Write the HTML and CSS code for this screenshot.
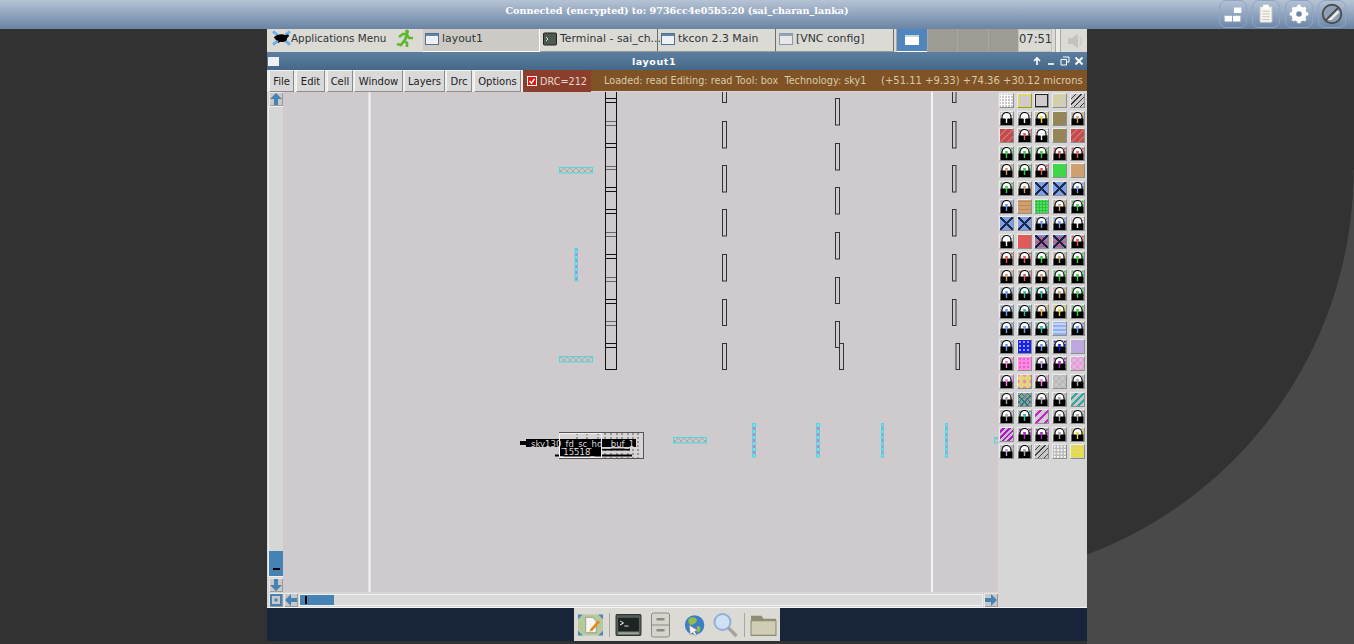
FILE: index.html
```html
<!DOCTYPE html>
<html lang="en">
<head>
    <meta charset="UTF-8">
    <meta name="viewport" content="width=device-width, initial-scale=1.0">
    <title>layout1 - VNC</title>
    <link rel="stylesheet" href="styles.css">
</head>
<body>
    <svg class="defs" width="0" height="0">
        <symbol id="lock" viewBox="0 0 13 13">
            <path d="M2 7V5a4.5 4.5 0 0 1 9 0v2" fill="#fff" stroke="#000" stroke-width="1.1"/>
            <rect x="0.5" y="6.5" width="12" height="6.5" fill="#000"/>
            <path d="M5.2 4h2.6v2.5H5.2zM5.8 6.5h1.4v4.5H5.8z" fill="currentColor"/>
        </symbol>
        <symbol id="winicon" viewBox="0 0 14 14">
            <rect x="0.5" y="1.5" width="13" height="11" fill="#eef0f2" stroke="#55708f"/>
            <rect x="1" y="2" width="12" height="2" fill="#5a84ad"/>
        </symbol>
    </svg>

    <header class="vnc-bar">
        <div></div>
        <div class="vnc-title">Connected (encrypted) to: 9736cc4e05b5:20 (sai_charan_lanka)</div>
        <div class="vnc-tools">
            <span class="vnc-btn"><svg viewBox="0 0 28 28"><path d="M5 16h8v6H5zM14 16h8v6h-8zM15 7h8v6h-8z" fill="#fff"/></svg></span>
            <span class="vnc-btn"><svg viewBox="0 0 28 28"><rect x="7.5" y="6" width="13" height="17" rx="1" fill="#f8f6ee" stroke="#b4bfcc"/><rect x="11" y="4" width="6" height="4" fill="#fff"/><path d="M10 11h8M10 14h8M10 17h8M10 20h8" stroke="#c4c4ba"/></svg></span>
            <span class="vnc-btn"><svg viewBox="0 0 28 28"><circle cx="14" cy="14" r="6" fill="none" stroke="#fff" stroke-width="4.5"/><path d="M14 4v20M4 14h20M7 7l14 14M21 7L7 21" stroke="#fff" stroke-width="3.4"/><circle cx="14" cy="14" r="3" fill="#6f88a8"/></svg></span>
            <span class="vnc-btn"><svg viewBox="0 0 28 28"><circle cx="14" cy="14" r="10" fill="#8d9fb5" stroke="#4c4c4c" stroke-width="2"/><path d="M8 19h5l8-8" fill="none" stroke="#e8edf2" stroke-width="3"/><path d="M7 21L21 7" stroke="#4c4c4c" stroke-width="2"/></svg></span>
        </div>
    </header>

    <main class="desktop">
        <nav class="panel">
            <div class="apps">
                <svg class="apps-icon" viewBox="0 0 20 18"><path d="M1 2l5 4M19 2l-5 4M1 16l5-4M19 16l-5-4" stroke="#6fb0e8" stroke-width="3"/><path d="M2 8c3-3 9-4 12-2l3-1 1 2-2 2c0 3-3 5-7 4-1 0-2 2-3 1l1-2C4 12 3 10 2 8z" fill="#000"/></svg>
                <span>Applications Menu</span>
                <svg class="run-icon" viewBox="0 0 18 18"><circle cx="11" cy="2.5" r="2" fill="#5cb82e"/><path d="M1 15l4 1 3-4 3 2v4M3 8l4-3h4l-2 6M11 6l2 3 4 0" fill="none" stroke="#5cb82e" stroke-width="2.6"/></svg>
            </div>
            <div class="task pressed"><svg><use href="#winicon"/></svg>layout1</div>
            <div class="task"><svg viewBox="0 0 14 14"><rect x="0.5" y="1" width="13" height="12" rx="1" fill="#4c5a52" stroke="#222"/><path d="M3 5l2 2-2 2" stroke="#ddd" fill="none"/></svg>Terminal - sai_ch...</div>
            <div class="task"><svg><use href="#winicon"/></svg>tkcon 2.3 Main</div>
            <div class="task dim"><svg><use href="#winicon"/></svg>[VNC config]</div>
            <div class="pager">
                <span class="desk on"><svg viewBox="0 0 14 10"><rect width="14" height="10" fill="#fff"/><rect y="0" width="14" height="2" fill="#c8d4e0"/></svg></span>
                <span class="desk"></span>
                <span class="desk"></span>
                <span class="desk"></span>
            </div>
            <div class="clock">07:51</div>
            <div class="grip"></div>
            <svg class="speaker" viewBox="0 0 20 20"><path d="M3 7h4l6-4v14l-6-4H3z" fill="#c4c2bd"/><path d="M15 6c2 2 2 6 0 8" stroke="#cfcdc8" stroke-width="2" fill="none"/></svg>
        </nav>

        <section class="window">
            <div class="win-title">
                <span class="win-menu"></span>
                <span class="win-name">layout1</span>
                <span class="win-controls">
                    <svg viewBox="0 0 10 10"><path d="M5 9V2M2 5l3-3 3 3" stroke="#fff" stroke-width="1.6" fill="none"/></svg>
                    <svg viewBox="0 0 10 10"><path d="M2 8h6" stroke="#fff" stroke-width="1.6"/></svg>
                    <svg viewBox="0 0 10 10"><path d="M3 1h6v5H7M1 3.5h5.5V9H1z" stroke="#fff" fill="none"/></svg>
                    <svg viewBox="0 0 10 10"><path d="M1.5 1.5l7 7M8.5 1.5l-7 7" stroke="#fff" stroke-width="1.8"/></svg>
                </span>
            </div>

            <div class="menu-row">
                <button class="menu-btn w-file">File</button>
                <button class="menu-btn w-edit">Edit</button>
                <button class="menu-btn w-cell">Cell</button>
                <button class="menu-btn w-window">Window</button>
                <button class="menu-btn w-layers">Layers</button>
                <button class="menu-btn w-drc">Drc</button>
                <button class="menu-btn w-options">Options</button>
                <div class="drc-box">
                    <svg class="drc-check" viewBox="0 0 10 10"><rect width="10" height="10" fill="#fff"/><rect x="1" y="1" width="8" height="8" fill="#e01818"/><path d="M2.5 5l2 2.2 3-4.4" stroke="#fff" stroke-width="1.4" fill="none"/></svg>
                    DRC=212
                </div>
                <div class="status">
                    <span class="status-msg">Loaded: read Editing: read Tool: box&nbsp; Technology: sky1</span>
                    <span class="status-pos">(+51.11 +9.33) +74.36 +30.12 microns</span>
                </div>
            </div>

            <div class="work">
                <div class="left-col">
                    <div class="vscroll">
                        <span class="arrow-btn"><svg viewBox="0 0 14 14"><path d="M7 1l6 6H9v6H5V7H1z" fill="#4682b4"/></svg></span>
                        <div class="vtrough"><div class="vthumb"><span class="tick-h"></span></div></div>
                        <span class="arrow-btn"><svg viewBox="0 0 14 14"><path d="M7 13l6-6H9V1H5v6H1z" fill="#4682b4"/></svg></span>
                    </div>
                </div>

                <div class="center-col">
                    <svg class="canvas" viewBox="283 92 715 500">
                        <defs>
                            <pattern id="hatch" width="6" height="6" patternUnits="userSpaceOnUse">
                                <rect width="6" height="6" fill="#c9c9c9"/>
                                <path d="M0 0l6 6M6 0L0 6" stroke="#a9a9a9"/>
                            </pattern>
                            <pattern id="pinkdots" width="1" height="6" patternUnits="userSpaceOnUse">
                                <rect width="1" height="6" fill="#8fd8d8"/>
                                <rect width="1" height="3" y="1" fill="#e46ed8"/>
                            </pattern>
                        </defs>
                        <rect x="283" y="92" width="715" height="500" fill="#cfcacd"/>
                        <path d="M369.5 92v500M932 92v500" stroke="#f4f4f4" stroke-width="2"/>

                        <g class="ladder">
                            <rect x="605.5" y="88" width="11" height="281.5"/>
                            <path d="M606 98.5h10M606 102.5h10M606 143.5h10M606 147.5h10M606 187.5h10M606 191.5h10M606 209.5h10M606 213.5h10M606 254.5h10M606 258.5h10M606 299.5h10M606 303.5h10M606 343.5h10M606 347.5h10"/>
                            <path class="soft" d="M606 121.5h10M606 125.5h10M606 166.5h10M606 169.5h10M606 232.5h10M606 236.5h10M606 277.5h10M606 281.5h10M606 321.5h10M606 325.5h10"/>
                        </g>

                        <g class="slots">
                            <rect x="722.5" y="86" width="4" height="16.5"/>
                            <rect x="722.5" y="121.5" width="4" height="26.5"/>
                            <rect x="722.5" y="165.5" width="4" height="26.5"/>
                            <rect x="722.5" y="209.5" width="4" height="26.5"/>
                            <rect x="722.5" y="254.5" width="4" height="26.5"/>
                            <rect x="722.5" y="299.5" width="4" height="26"/>
                            <rect x="722.5" y="343.5" width="4" height="26"/>
                            <rect x="835.5" y="98.5" width="4" height="26.5"/>
                            <rect x="835.5" y="143.5" width="4" height="26.5"/>
                            <rect x="835.5" y="187.5" width="4" height="26.5"/>
                            <rect x="835.5" y="232.5" width="4" height="26.5"/>
                            <rect x="835.5" y="277.5" width="4" height="26"/>
                            <rect x="835.5" y="321.5" width="4" height="26"/>
                            <rect x="839.5" y="343.5" width="4" height="26"/>
                            <rect x="952.5" y="86" width="3.5" height="16.5"/>
                            <rect x="952.5" y="121.5" width="3.5" height="26.5"/>
                            <rect x="952.5" y="165.5" width="3.5" height="26.5"/>
                            <rect x="952.5" y="209.5" width="3.5" height="26.5"/>
                            <rect x="952.5" y="254.5" width="3.5" height="26.5"/>
                            <rect x="952.5" y="299.5" width="3.5" height="26"/>
                            <rect x="956" y="343.5" width="3.5" height="26"/>
                        </g>

                        <g class="contacts">
                            <rect x="559.5" y="167.5" width="33" height="5.5" fill="url(#hatch)"/>
                            <rect x="559.5" y="356.5" width="33" height="5.5" fill="url(#hatch)"/>
                            <rect x="673.5" y="437.5" width="33" height="5.5" fill="url(#hatch)"/>
                            <rect x="994.5" y="437.5" width="6" height="5.5" fill="url(#hatch)"/>
                            <rect x="575" y="248.5" width="2.5" height="32.5" fill="url(#pinkdots)"/>
                            <rect x="752.5" y="423.5" width="3" height="33.5" fill="url(#pinkdots)"/>
                            <rect x="816.5" y="423.5" width="3" height="33.5" fill="url(#pinkdots)"/>
                            <rect x="881.5" y="423.5" width="2" height="33.5" fill="url(#pinkdots)"/>
                            <rect x="945.5" y="423.5" width="2" height="33.5" fill="url(#pinkdots)"/>
                        </g>

                        <g class="cell-inst">
                            <rect class="cell-fill" x="559.5" y="432.5" width="84" height="26"/>
                            <path class="cell-bars" d="M577 433v25M587 433v25M598 433v25M605 433v25M611 433v25M617 433v25M622 433v25M628 433v25M633 433v25M638 433v25"/>
                            <path class="cell-black" d="M555 455.5h77M600 449.5h30"/>
                            <rect x="520" y="441" width="12" height="4" fill="#000"/>
                            <rect x="526" y="439" width="110" height="8" fill="#000"/>
                            <rect x="559" y="447" width="42" height="8" fill="#000"/>
                            <rect class="cell-box" x="559.5" y="433.5" width="42" height="24"/>
                            <text class="cell-text" x="531" y="446.5">sky130_fd_sc_hd__buf_1</text>
                            <text class="cell-text" x="559" y="454.5">_15518_</text>
                        </g>
                    </svg>

                    <div class="hscroll">
                        <span class="arrow-btn"><svg viewBox="0 0 14 14"><rect x="2" y="2" width="10" height="10" fill="none" stroke="#4682b4" stroke-width="2"/><rect x="5.5" y="5.5" width="3" height="3" fill="#4682b4"/></svg></span>
                        <span class="arrow-btn"><svg viewBox="0 0 14 14"><path d="M1 7l6-6v4h6v4H7v4z" fill="#4682b4"/></svg></span>
                        <div class="htrough"><div class="hthumb"><span class="tick-v"></span></div></div>
                        <span class="arrow-btn"><svg viewBox="0 0 14 14"><path d="M13 7L7 1v4H1v4h6v4z" fill="#4682b4"/></svg></span>
                    </div>
                </div>

                <aside class="palette">
                    <i class="sw f-dots"></i><i class="sw f-ybox"></i><i class="sw f-kbox"></i><i class="sw f-ystripe"></i><i class="sw f-kstripe"></i>
                    <i class="sw c-w"><svg><use href="#lock"/></svg></i><i class="sw c-w"><svg><use href="#lock"/></svg></i><i class="sw c-y"><svg><use href="#lock"/></svg></i><i class="sw f-brown"></i><i class="sw c-t"><svg><use href="#lock"/></svg></i>
                    <i class="sw f-red"></i><i class="sw c-r"><svg><use href="#lock"/></svg></i><i class="sw c-w"><svg><use href="#lock"/></svg></i><i class="sw f-brown"></i><i class="sw f-red"></i>
                    <i class="sw c-g"><svg><use href="#lock"/></svg></i><i class="sw c-g"><svg><use href="#lock"/></svg></i><i class="sw c-g"><svg><use href="#lock"/></svg></i><i class="sw c-r"><svg><use href="#lock"/></svg></i><i class="sw c-r"><svg><use href="#lock"/></svg></i>
                    <i class="sw c-t"><svg><use href="#lock"/></svg></i><i class="sw c-g"><svg><use href="#lock"/></svg></i><i class="sw c-r"><svg><use href="#lock"/></svg></i><i class="sw f-green"></i><i class="sw f-tan"></i>
                    <i class="sw c-g"><svg><use href="#lock"/></svg></i><i class="sw c-t"><svg><use href="#lock"/></svg></i><i class="sw f-xb"></i><i class="sw f-xb"></i><i class="sw c-b"><svg><use href="#lock"/></svg></i>
                    <i class="sw c-b"><svg><use href="#lock"/></svg></i><i class="sw f-brick"></i><i class="sw f-gbrick"></i><i class="sw c-t"><svg><use href="#lock"/></svg></i><i class="sw c-g"><svg><use href="#lock"/></svg></i>
                    <i class="sw f-xb"></i><i class="sw f-xb"></i><i class="sw c-b"><svg><use href="#lock"/></svg></i><i class="sw c-b"><svg><use href="#lock"/></svg></i><i class="sw c-w"><svg><use href="#lock"/></svg></i>
                    <i class="sw c-w"><svg><use href="#lock"/></svg></i><i class="sw f-rsolid"></i><i class="sw f-xr"></i><i class="sw f-xr"></i><i class="sw c-r"><svg><use href="#lock"/></svg></i>
                    <i class="sw c-r"><svg><use href="#lock"/></svg></i><i class="sw c-r"><svg><use href="#lock"/></svg></i><i class="sw c-g"><svg><use href="#lock"/></svg></i><i class="sw c-t"><svg><use href="#lock"/></svg></i><i class="sw c-g"><svg><use href="#lock"/></svg></i>
                    <i class="sw c-t"><svg><use href="#lock"/></svg></i><i class="sw c-r"><svg><use href="#lock"/></svg></i><i class="sw c-t"><svg><use href="#lock"/></svg></i><i class="sw c-g"><svg><use href="#lock"/></svg></i><i class="sw c-g"><svg><use href="#lock"/></svg></i>
                    <i class="sw c-b"><svg><use href="#lock"/></svg></i><i class="sw c-a"><svg><use href="#lock"/></svg></i><i class="sw c-a"><svg><use href="#lock"/></svg></i><i class="sw c-t"><svg><use href="#lock"/></svg></i><i class="sw c-g"><svg><use href="#lock"/></svg></i>
                    <i class="sw c-b"><svg><use href="#lock"/></svg></i><i class="sw c-a"><svg><use href="#lock"/></svg></i><i class="sw c-o"><svg><use href="#lock"/></svg></i><i class="sw c-y"><svg><use href="#lock"/></svg></i><i class="sw c-g"><svg><use href="#lock"/></svg></i>
                    <i class="sw c-b"><svg><use href="#lock"/></svg></i><i class="sw c-b"><svg><use href="#lock"/></svg></i><i class="sw c-a"><svg><use href="#lock"/></svg></i><i class="sw f-wave"></i><i class="sw c-b"><svg><use href="#lock"/></svg></i>
                    <i class="sw c-b"><svg><use href="#lock"/></svg></i><i class="sw f-blue"></i><i class="sw c-b"><svg><use href="#lock"/></svg></i><i class="sw c-u"><svg><use href="#lock"/></svg></i><i class="sw f-lav"></i>
                    <i class="sw c-p"><svg><use href="#lock"/></svg></i><i class="sw f-pink"></i><i class="sw c-l"><svg><use href="#lock"/></svg></i><i class="sw c-m"><svg><use href="#lock"/></svg></i><i class="sw f-prings"></i>
                    <i class="sw c-p"><svg><use href="#lock"/></svg></i><i class="sw f-yrings"></i><i class="sw c-p"><svg><use href="#lock"/></svg></i><i class="sw f-grings"></i><i class="sw c-n"><svg><use href="#lock"/></svg></i>
                    <i class="sw c-n"><svg><use href="#lock"/></svg></i><i class="sw f-xteal"></i><i class="sw c-n"><svg><use href="#lock"/></svg></i><i class="sw c-n"><svg><use href="#lock"/></svg></i><i class="sw f-tstripe"></i>
                    <i class="sw c-n"><svg><use href="#lock"/></svg></i><i class="sw c-a"><svg><use href="#lock"/></svg></i><i class="sw f-mdash"></i><i class="sw c-n"><svg><use href="#lock"/></svg></i><i class="sw c-n"><svg><use href="#lock"/></svg></i>
                    <i class="sw f-mstripe"></i><i class="sw c-m"><svg><use href="#lock"/></svg></i><i class="sw c-m"><svg><use href="#lock"/></svg></i><i class="sw c-n"><svg><use href="#lock"/></svg></i><i class="sw c-y"><svg><use href="#lock"/></svg></i>
                    <i class="sw c-l"><svg><use href="#lock"/></svg></i><i class="sw c-n"><svg><use href="#lock"/></svg></i><i class="sw f-dstripe"></i><i class="sw f-wdots"></i><i class="sw f-ydots"></i>
                </aside>
            </div>
        </section>

        <footer class="dock-strip">
            <div class="dock">
                <svg class="dock-icon" viewBox="0 0 28 24"><rect x="1" y="1" width="26" height="22" rx="3" fill="#b5c99a"/><path d="M1 6V1h5zM27 6V1h-5zM1 18v5h5zM27 18v5h-5z" fill="#4f86c0"/><path d="M9 4h7l4 4v12H9z" fill="#f7f7f2" stroke="#999"/><path d="M14 16l8-9 2 2-8 9-3 1z" fill="#e08a1e"/></svg>
                <span class="dock-sep"></span>
                <svg class="dock-icon" viewBox="0 0 26 24"><rect x="1" y="2" width="24" height="20" rx="1" fill="#55605a" stroke="#333"/><rect x="3" y="5" width="20" height="13" fill="#1e2422"/><path d="M5 8l3 2-3 2M9 13h4" stroke="#ddd" fill="none"/><rect x="3" y="19" width="20" height="2" fill="#9fa69f"/></svg>
                <svg class="dock-icon" viewBox="0 0 24 26"><rect x="3" y="1" width="18" height="24" rx="2" fill="#d6d4cc" stroke="#8a8a84"/><path d="M3 13h18" stroke="#8a8a84"/><rect x="8" y="6" width="8" height="2.5" fill="#8a8a84"/><rect x="8" y="17" width="8" height="2.5" fill="#8a8a84"/></svg>
                <svg class="dock-icon" viewBox="0 0 24 24"><circle cx="13" cy="12" r="9" fill="#3d7fc4"/><path d="M8 6c3-2 6-1 7 1s-3 5-5 5-4-4-2-6zM16 13c2 0 3 1 2 4s-3 2-3 0 0-4 1-4z" fill="#8fbc4a"/><path d="M8 12l1 9 2-2 3 3 1-1-2-3 3-1z" fill="#f0f0f0" stroke="#777" stroke-width="0.5"/></svg>
                <svg class="dock-icon" viewBox="0 0 26 26"><circle cx="10" cy="10" r="8" fill="#cfe0f4" stroke="#8fb0d8" stroke-width="2"/><path d="M16 16l8 8" stroke="#a5a39c" stroke-width="3.4"/></svg>
                <span class="dock-sep"></span>
                <svg class="dock-icon" viewBox="0 0 26 24"><path d="M1 3h10l2 3h12v16H1z" fill="#8d8c72"/><path d="M1 8h24v14H1z" fill="#cfcdb4" stroke="#8d8c72"/></svg>
            </div>
        </footer>
    </main>
</body>
</html>
```

FILE: styles.css
```css
/* Page and wallpaper */
body {
    margin: 0;
    height: 644px;
    overflow: hidden;
    display: flex;
    flex-direction: column;
    font-family: "DejaVu Sans", sans-serif;
    background-color: #323232;
    background-image: linear-gradient(#323232, #323232), radial-gradient(circle 411px at -144px 141px, #323232 99.8%, #494949 100%);
    background-repeat: no-repeat;
    background-position: 1087px 29px, 1087px 29px;
    background-size: 267px 141px, 267px 615px;
}

.defs {
    display: block;
    height: 0;
}

/* VNC bar */
.vnc-bar {
    height: 29px;
    flex: none;
    display: grid;
    grid-template-columns: 1fr auto 1fr;
    align-items: center;
    background: linear-gradient(#b6c3d5, #6a84a5);
}

.vnc-title {
    color: #fff;
    font-family: "DejaVu Serif", serif;
    font-weight: bold;
    font-size: 9.6px;
    padding-bottom: 9px;
}

.vnc-tools {
    justify-self: end;
    display: flex;
    gap: 5px;
    padding-right: 8px;
    height: 29px;
}

.vnc-btn {
    width: 26px;
    height: 26px;
    border: 1px solid #8ea5c4;
    border-radius: 7px;
}

.vnc-btn svg {
    display: block;
    width: 26px;
    height: 26px;
}

/* Desktop column */
.desktop {
    width: 820px;
    margin: 0 auto;
    display: flex;
    flex-direction: column;
}

/* Top panel */
.panel {
    height: 23px;
    display: flex;
    align-items: stretch;
    background-color: #dcdad5;
    font-size: 10.9px;
    color: #2e3436;
}

.apps {
    width: 156px;
    flex: none;
    display: flex;
    align-items: center;
    padding: 0 0 5px 5px;
    box-sizing: border-box;
    font-size: 10.4px;
}

.apps-icon {
    width: 19px;
    height: 18px;
}

.apps span {
    width: 100px;
    white-space: nowrap;
}

.run-icon {
    width: 18px;
    height: 18px;
    margin-left: 5px;
}

.task {
    width: 118px;
    flex: none;
    box-sizing: border-box;
    display: flex;
    align-items: center;
    gap: 3px;
    padding: 0 0 3px 3px;
    border-right: 1px solid #6f6f6a;
    border-bottom: 1px solid #9b9992;
    white-space: nowrap;
}

.task svg {
    width: 14px;
    height: 14px;
    flex: none;
}

.task.pressed {
    width: 117px;
    padding-left: 2px;
    background-color: #cdcac5;
    border-right: 1px solid #fff;
    border-bottom: 1px solid #fff;
}

.task.dim svg {
    opacity: 0.6;
}

.pager {
    display: flex;
    margin-left: 2px;
}

.desk {
    width: 30.5px;
    background-color: #9d9b93;
    border-left: 1px solid #a9a79f;
    box-sizing: border-box;
}

.desk.on {
    background-color: #4f86bd;
    display: flex;
    align-items: center;
    justify-content: center;
    border-bottom: 1px solid #fff;
}

.desk.on svg {
    width: 14px;
    height: 10px;
}

.clock {
    width: 34px;
    font-size: 11.5px;
    line-height: 19px;
    text-align: center;
    box-sizing: border-box;
    border: 1px solid #c4c2bc;
}

.grip {
    width: 4px;
    margin: 0 4px 0 3px;
    background-color: #ecebe7;
    border: solid #a9a79f;
    border-width: 0 1px;
}

.speaker {
    width: 20px;
    height: 20px;
    align-self: center;
}

/* Window frame */
.window {
    height: 556px;
    box-sizing: border-box;
    display: flex;
    flex-direction: column;
    background-color: #d6d6d6;
    border-bottom: 1px solid #f4f4f4;
}

.win-title {
    height: 18px;
    flex: none;
    display: grid;
    grid-template-columns: 1fr auto 1fr;
    align-items: center;
    background: linear-gradient(#5d7f9f, #45688a);
}

.win-menu {
    width: 11px;
    height: 9px;
    margin-left: 1px;
    background-color: #eef1f4;
}

.win-name {
    color: #fff;
    font-weight: bold;
    font-size: 9.5px;
    letter-spacing: 0.6px;
    padding-right: 46px;
}

.win-controls {
    justify-self: end;
    display: flex;
    gap: 4px;
    padding-right: 3px;
}

.win-controls svg {
    width: 10px;
    height: 10px;
}

.menu-row {
    height: 22px;
    flex: none;
    display: flex;
    align-items: stretch;
    padding-left: 2px;
    font-size: 10px;
    background-color: #ececec;
}

.menu-btn {
    flex: none;
    margin: 0 1px 0 0;
    padding: 0;
    font: inherit;
    color: #222;
    background-color: #d9d9d9;
    border: 1px solid;
    border-color: #f4f4f4 #8c8c8c #8c8c8c #f4f4f4;
}

.w-file { width: 25px; margin-right: 2px; }
.w-edit { width: 29px; margin-right: 2px; }
.w-cell { width: 26px; }
.w-window { width: 49px; }
.w-layers { width: 41px; }
.w-drc { width: 26px; margin-right: 2px; }
.w-options { width: 47px; margin-right: 2px; }

.drc-box {
    width: 68px;
    flex: none;
    display: flex;
    align-items: center;
    justify-content: center;
    gap: 3px;
    font-size: 9.7px;
    background-color: #8b3e2b;
    color: #e8d9cc;
}

.drc-check {
    width: 10px;
    height: 10px;
}

.status {
    flex: 1;
    min-width: 0;
    display: flex;
    align-items: center;
    padding: 0 0 0 13px;
    white-space: nowrap;
    font-size: 9.7px;
    background-color: #7f5325;
    color: #d9c9ac;
    border-bottom: 1px solid #d6d6d6;
}

.status-msg {
    width: 277px;
    flex: none;
}

.status-pos {
    font-size: 10px;
}

/* Work area */
.work {
    flex: 1;
    display: flex;
    min-height: 0;
}

.left-col {
    width: 16px;
    box-sizing: border-box;
    flex: none;
    padding-left: 2px;
}

.vscroll {
    width: 14px;
    height: 500px;
    display: flex;
    flex-direction: column;
}

.arrow-btn {
    width: 14px;
    height: 14px;
    flex: none;
    background-color: #c9c9c9;
    box-shadow: inset 1px 1px #e8e8e8, inset -1px -1px #9a9a9a;
}

.arrow-btn svg {
    display: block;
    width: 14px;
    height: 14px;
}

.vtrough {
    flex: 1;
    display: flex;
    flex-direction: column;
    justify-content: flex-end;
    margin: 1px 0 2px;
    background-color: #d6d6d6;
    box-shadow: 0 0 0 1px #f0f0f0;
}

.vthumb {
    height: 25px;
    background-color: #4682b4;
    display: flex;
    align-items: flex-end;
    justify-content: center;
    padding-bottom: 6px;
    box-sizing: border-box;
}

.tick-h {
    width: 7px;
    height: 2px;
    background-color: #000;
}

.center-col {
    width: 715px;
    flex: none;
    display: flex;
    flex-direction: column;
}

.canvas {
    display: block;
    width: 715px;
    height: 500px;
    flex: none;
}

.ladder rect, .ladder path, .slots rect {
    fill: none;
    stroke: #111;
}

.ladder path.soft {
    stroke: #666;
}

.slots rect {
    stroke: #333;
}

.contacts rect {
    stroke: #48dcdc;
}

.cell-fill {
    fill: #d8d4d6;
    stroke: #555;
}

.cell-bars {
    stroke: #555;
    stroke-dasharray: 2 2;
}

.cell-black {
    stroke: #000;
    stroke-width: 2;
}

.cell-text {
    font-family: "DejaVu Sans", sans-serif;
    font-size: 8.5px;
    fill: #dcdcdc;
}

.cell-box {
    fill: none;
    stroke: #f2f2f2;
}

.hscroll {
    height: 14px;
    margin-left: -14px;
    padding-top: 1px;
    display: flex;
    align-items: center;
    gap: 1px;
}

.htrough {
    flex: 1;
    height: 10px;
    background-color: #d9d9d9;
    border: 1px solid #f0f0f0;
}

.hthumb {
    width: 34px;
    height: 10px;
    background-color: #4682b4;
    padding: 1px 0 0 5px;
    box-sizing: border-box;
}

.tick-v {
    display: block;
    width: 2px;
    height: 8px;
    background-color: #000;
}

/* Layer palette */
.palette {
    width: 89px;
    box-sizing: border-box;
    flex: none;
    display: grid;
    grid-template-columns: repeat(5, 17.6px);
    grid-auto-rows: 17.55px;
    align-content: start;
    justify-items: center;
    align-items: center;
    background-color: #d6d6d6;
}

.sw {
    display: block;
    width: 15px;
    height: 15px;
    box-sizing: border-box;
    border: 1px solid;
    border-color: #ececec #8f8f8f #8f8f8f #ececec;
    background-color: #c4c2c4;
    background-image: radial-gradient(currentColor 0.8px, transparent 1px);
    background-size: 3.4px 3.4px;
}

.sw svg {
    display: block;
    width: 13px;
    height: 13px;
}

.c-w { color: #f4f4f4; }
.c-n { color: #aaa; }
.c-r { color: #e05a5a; }
.c-g { color: #3fd04a; }
.c-t { color: #cfa06e; }
.c-b { color: #6f9cf0; }
.c-u { color: #1a20f0; }
.c-p { color: #ef80dc; }
.c-m { color: #a828c0; }
.c-l { color: #b8a0d8; }
.c-y { color: #e8d840; }
.c-a { color: #30b8a8; }
.c-o { color: #e8b050; }

.f-dots { background: radial-gradient(#fff 1px, transparent 1.2px) 0 0 / 3px 3px, #c8c6c8; }
.f-ybox { background: #cfcacd; box-shadow: inset 0 0 0 1px #e8e020; }
.f-kbox { background: #cfcacd; box-shadow: inset 0 0 0 1px #222; }
.f-ystripe { background: repeating-linear-gradient(135deg, #cfcacd 0 3px, #e4dc50 3px 4px); }
.f-kstripe { background: repeating-linear-gradient(135deg, #cfcacd 0 3px, #333 3px 4px); }
.f-brown { background: repeating-linear-gradient(135deg, #a67f58 0 3px, #7f8f58 3px 5px); }
.f-red { background: repeating-linear-gradient(135deg, #c04c50 0 4px, #d87068 4px 5px); }
.f-green { background: #3fd64a; }
.f-tan { background: #cfa06e; }
.f-rsolid { background: #e05a5a; }
.f-xb { background: linear-gradient(45deg, transparent 44%, #1a2a48 44% 56%, transparent 56%), linear-gradient(-45deg, transparent 44%, #1a2a48 44% 56%, transparent 56%), #7ea0e8; }
.f-xr { background: linear-gradient(45deg, transparent 44%, #1a2040 44% 56%, transparent 56%), linear-gradient(-45deg, transparent 44%, #1a2040 44% 56%, transparent 56%), linear-gradient(#6f8ce0 50%, #d85a60 50%) 0 0 / 100% 4px; }
.f-brick { background: repeating-linear-gradient(0deg, #cfa06e 0 3px, #b88c5c 3px 4px); }
.f-gbrick { background: radial-gradient(#2fc040 1px, transparent 1.2px) 0 0 / 3px 3px, #50e060; }
.f-wave { background: repeating-linear-gradient(0deg, #8fb0f4 0 2px, #c4d2f0 2px 4px); }
.f-blue { background: radial-gradient(#90a0ff 1px, transparent 1.2px) 0 0 / 4px 4px, #1a20e8; }
.f-lav { background: #bca8dc; }
.f-pink { background: radial-gradient(#e860c8 1px, transparent 1.2px) 0 0 / 4px 4px, #ff88e4; }
.f-prings { background: radial-gradient(circle, transparent 2px, #f088dc 2.2px 3px, transparent 3.2px) 0 0 / 6.5px 6.5px, #d8c0d8; }
.f-yrings { background: radial-gradient(circle, transparent 2px, #f0e040 2.2px 3px, #e880d0 3.2px) 0 0 / 6.5px 6.5px, #d8d0a0; }
.f-grings { background: radial-gradient(circle, transparent 2px, #b4b4b4 2.2px 3px, transparent 3.2px) 0 0 / 6.5px 6.5px, #c8c6c8; }
.f-xteal { background: repeating-linear-gradient(45deg, transparent 0 3px, #208080 3px 4px), repeating-linear-gradient(-45deg, transparent 0 3px, #208080 3px 4px), #9a9a9a; }
.f-tstripe { background: repeating-linear-gradient(135deg, #c8c6c8 0 3px, #30a8a0 3px 5px); }
.f-mdash { background: repeating-linear-gradient(135deg, #d0ccd0 0 3px, #c028c8 3px 5px, #d0ccd0 5px 6px); }
.f-mstripe { background: repeating-linear-gradient(135deg, #c8c0c8 0 2px, #b018c8 2px 4px); }
.f-dstripe { background: repeating-linear-gradient(135deg, #c8c6c8 0 3px, #444 3px 4px); }
.f-wdots { background: radial-gradient(#fff 1px, transparent 1.2px) 0 0 / 3.4px 3.4px, #bcbcbc; }
.f-ydots { background: radial-gradient(#ccc 1px, transparent 1.2px) 0 0 / 3.4px 3.4px, #ece030; }

/* Dock */
.dock-strip {
    height: 33px;
    display: flex;
    justify-content: center;
    background-color: #17243a;
}

.dock {
    width: 206px;
    display: flex;
    align-items: center;
    justify-content: space-between;
    box-sizing: border-box;
    padding: 0 3px;
    background-color: #dcdad5;
}

.dock-icon {
    width: 27px;
    height: 26px;
}

.dock-sep {
    width: 1px;
    height: 24px;
    background-color: #a9a79f;
}
```
